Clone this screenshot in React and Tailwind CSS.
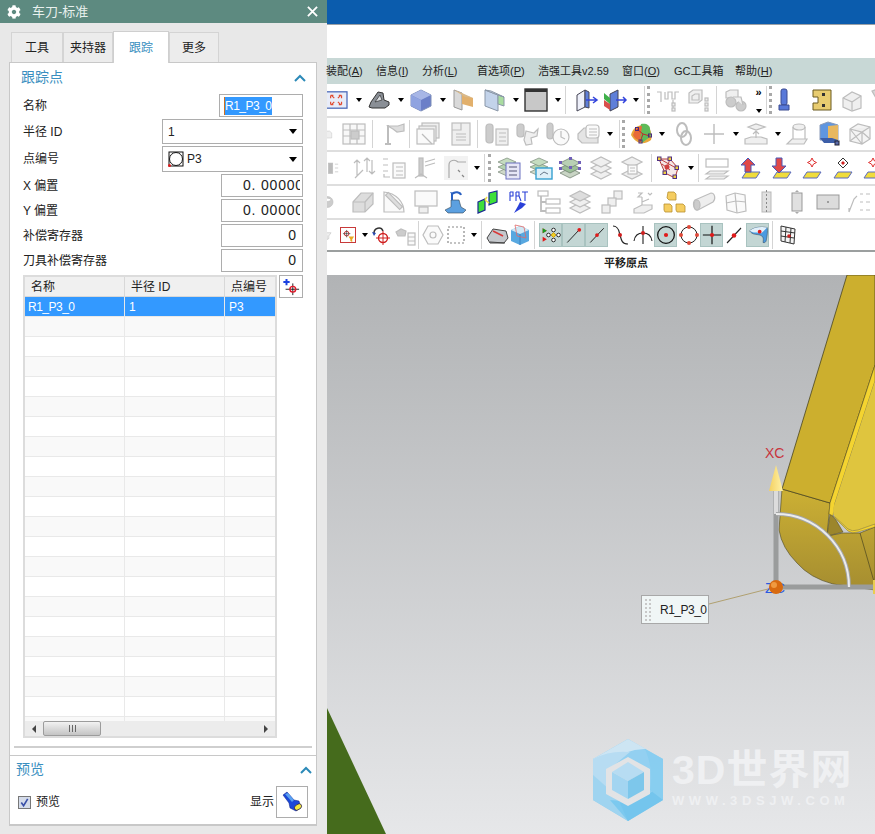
import { FaCog } from "react-icons/fa";

// icons are drawn slightly over their 22px slot, as in the reference
const T = ({ c = "", w = "w-[22px]", children }) => (
  <svg viewBox="1 1 22 22" className={`h-[22px] ${w} shrink-0 overflow-visible ${c}`}>
    {children}
  </svg>
);

// disabled (greyed out) toolbar icon
const Gy = ({ c, w, children }) => (
  <T c={c} w={w}>
    <g fill="#efefef" stroke="#bdbdbd" strokeWidth="1.2">
      {children}
    </g>
  </T>
);

const Caret = ({ c = "" }) => (
  <span className={`h-0 w-0 shrink-0 border-x-[3.5px] border-t-[4px] border-x-transparent border-t-black ${c}`} />
);
const Sep = ({ c = "" }) => <span className={`h-[28px] w-px shrink-0 bg-[#d4d4d4] ${c}`} />;
const Grip = ({ c = "" }) => (
  <span className={`h-[28px] w-[3px] shrink-0 border-l-[3px] border-dotted border-[#a8a8a8] ${c}`} />
);
const Hl = ({ c = "", children }) => (
  <span className={`flex h-[24px] w-[23px] shrink-0 items-center justify-center border border-[#a9c3c0] bg-[#c3d6d4] ${c}`}>
    {children}
  </span>
);

const Row = ({ children, last }) => (
  <div className={`flex items-center overflow-hidden bg-white ${last ? "h-[32px] border-b-2 border-[#9b9f9f]" : "h-[34px] border-b-2 border-[#dedede]"}`}>
    {children}
  </div>
);

const Layers = ({ c, inner }) => (
  <T c={c}>
    <g stroke="#7a8a7a" strokeWidth=".7">
      <path d="M2 16l9-4 9 4-9 4z" fill="#cfd8c8" />
      <path d="M2 11l9-4 9 4-9 4z" fill="#b5d3b0" />
      <path d="M2 6l9-4 9 4-9 4z" fill="#c5dcc0" />
    </g>
    {inner}
  </T>
);

const Plane = ({ c, children }) => (
  <T c={c}>
    <path d="M5 22l4-6h14l-4 6z" fill="#f0dc3c" stroke="#5a6ac0" />
    {children}
  </T>
);

const Toolbars = () => (
  <div>
    <Row>
      <T w="w-[20px]">
        <rect x="-4" y="3" width="27" height="18" fill="#e8ecf8" stroke="#4a68b8" strokeWidth="1.4" />
        <path d="M6 7l3 3M16 7l-3 3M6 17l3-3M16 17l-3-3M5 7h3M5 7v3M17 7h-3M17 7v3M5 17h3M5 17v-3M17 17h-3M17 17v-3" stroke="#e04a30" strokeWidth="1.3" fill="none" />
      </T>
      <Caret c="ml-[9px]" />
      <T c="ml-[6px]">
        <path d="M2 19l2-5 7-10 5 1 1 7 5 2v3l-4 3H5z" fill="#8a8f96" stroke="#333" />
        <path d="M8 14l5-7 2 5z" fill="#d9dce0" stroke="#333" strokeWidth=".7" />
      </T>
      <Caret c="ml-[8px]" />
      <T c="ml-[6px]">
        <path d="M2 7l10-5 10 5v11l-10 5-10-5z" fill="#6b7fc8" stroke="#7f8fb8" />
        <path d="M2 7l10-5 10 5-10 5z" fill="#a7b6e6" />
        <path d="M2 7l10 5v11l-10-5z" fill="#8fa3e0" />
      </T>
      <Caret c="ml-[8px]" />
      <T c="ml-[6px]">
        <path d="M3 2l8 3v17l-8-3z" fill="#d9d9d9" stroke="#999" />
        <path d="M11 6l11 4v9l-11-3z" fill="#e2b06c" />
        <path d="M3 2l8 3 11 5-8-1z" fill="#d9b98a" />
      </T>
      <T c="ml-[9px]">
        <path d="M3 2l13 5v16l-13-5z" fill="#c3d3ea" stroke="#8a97a8" />
        <path d="M16 7l6 2v9l-6-2z" fill="#a9dca0" stroke="#8a97a8" />
        <path d="M3 2l6 1 13 6-6-2z" fill="#dfe6ee" stroke="#8a97a8" />
      </T>
      <Caret c="ml-[8px]" />
      <T c="ml-[6px]">
        <rect x="1" y="1" width="22" height="22" fill="#c8c8c8" stroke="#333" strokeWidth="1.4" />
        <rect x="1" y="1" width="22" height="3" fill="#333" />
      </T>
      <Caret c="ml-[8px]" />
      <Sep c="ml-[4px]" />
      <T c="ml-[9px]">
        <path d="M3 7l8-5v17l-8 4z" fill="#eef0fa" stroke="#445" />
        <path d="M11 2l4 2v16l-4-1z" fill="#5f7fd8" stroke="#445" />
        <path d="M12 12h11M19 9l4 3-4 3" stroke="#3344dd" strokeWidth="1.5" fill="none" />
      </T>
      <T c="ml-[7px]">
        <path d="M7 6l8-4v17l-8 4z" fill="#5f7fd8" stroke="#445" />
        <path d="M1 5l6 5v6l-6-5z" fill="#3fb04a" />
        <path d="M1 12l6 4v6l-6-4z" fill="#d8504a" />
        <path d="M13 12h10M20 9l3 3-3 3" stroke="#3344dd" strokeWidth="1.5" fill="none" />
      </T>
      <Caret c="ml-[7px]" />
      <Sep c="ml-[5px]" />
      <Grip c="ml-[2px]" />
      <Gy c="ml-[7px]">
        <path d="M1 4h4v10M5 4v10M9 4v7h3V4h4v7h3V4h4M17 12v9" fill="none" />
        <rect x="16" y="15" width="3" height="3" />
        <rect x="16" y="20" width="3" height="3" />
      </Gy>
      <Gy c="ml-[9px]">
        <path d="M2 5l4-3h9v10l-4 3H2z" />
        <path d="M5 8l3-2h4v6H5z" />
        <rect x="18" y="10" width="3" height="3" />
        <rect x="18" y="15" width="3" height="3" />
        <rect x="18" y="20" width="3" height="3" />
      </Gy>
      <Sep c="ml-[6px]" />
      <Gy c="ml-[7px]">
        <path d="M3 4l4-2h8v8H3z" />
        <circle cx="8" cy="14" r="5" fill="#ccc" />
        <circle cx="18" cy="18" r="5" fill="#ccc" />
        <path d="M10 9h8l2 8" />
      </Gy>
      <span className="ml-[8px] flex h-[26px] w-[9px] shrink-0 flex-col items-center justify-between">
        <span className="text-[11px] font-bold leading-[10px] text-black">»</span>
        <Caret />
      </span>
      <Sep c="ml-[3px]" />
      <Grip c="ml-[2px]" />
      <T c="ml-[7px]">
        <rect x="3" y="1" width="6" height="16" rx="2" fill="#5878d8" stroke="#3a4a90" />
        <path d="M1 17h10v5H1z" fill="#5878d8" stroke="#3a4a90" />
      </T>
      <T c="ml-[10px]">
        <path d="M3 2h18v20H3v-7h5V9H3z" fill="#e8cc70" stroke="#6a5a20" />
        <rect x="12" y="5" width="3" height="3" fill="#333" />
        <rect x="12" y="16" width="3" height="3" fill="#333" />
      </T>
      <Gy c="ml-[8px]">
        <path d="M3 10l9-6 9 4v12l-9 3-9-4z" />
        <path d="M3 10l9 4v9M12 14l9-6" />
      </Gy>
      <Gy c="ml-[8px]">
        <path d="M2 3l6-2 3 6-5 3z" fill="#d8d8d8" />
        <rect x="8" y="9" width="14" height="13" />
        <path d="M11 13h8M11 16h8M11 19h8" />
      </Gy>
    </Row>

    <Row>
      <Gy w="w-[8px]">
        <path d="M-4 4h12l6 5v14H-4z" />
      </Gy>
      <Gy c="ml-[8px]">
        <rect x="1" y="2" width="22" height="20" fill="#f8f8f8" />
        <path d="M1 8h22M1 14h22M8 2v20M15 2v20" />
        <rect x="9" y="9" width="8" height="8" fill="#ccc" />
      </Gy>
      <Sep c="ml-[7px]" />
      <Gy c="ml-[10px]">
        <path d="M6 3v18M3 22h6" strokeWidth="2" fill="none" />
        <path d="M6 4l10 0 6-2v7l-7 1-4-3z" fill="#ddd" />
      </Gy>
      <Sep c="ml-[4px]" />
      <Gy c="ml-[7px]">
        <rect x="6" y="1" width="17" height="15" />
        <rect x="3" y="4" width="17" height="15" />
        <rect x="1" y="7" width="17" height="15" fill="#fafafa" />
        <path d="M6 12l10 10" />
      </Gy>
      <Gy c="ml-[10px]">
        <rect x="4" y="1" width="18" height="22" />
        <path d="M4 8h9V1M8 12h10M8 15h10M8 18h10" fill="none" />
      </Gy>
      <Sep c="ml-[6px]" />
      <Gy c="ml-[8px]">
        <rect x="1" y="2" width="7" height="19" rx="3" fill="#ccc" />
        <rect x="11" y="7" width="12" height="16" />
        <path d="M14 11h7M14 15h7M14 19h7" />
      </Gy>
      <Gy c="ml-[9px]">
        <rect x="1" y="2" width="7" height="13" rx="3" fill="#ccc" />
        <path d="M10 9l8 2 4-4-1 7-6 2 1 6-6 1-2-5z" />
      </Gy>
      <Gy c="ml-[8px]">
        <rect x="1" y="1" width="6" height="16" rx="3" fill="#ccc" />
        <circle cx="15" cy="15" r="8" fill="#fafafa" />
        <path d="M15 9v6l4 2" fill="none" />
      </Gy>
      <Gy c="ml-[9px]">
        <path d="M1 12l6-6h14v15H5l-4-4z" fill="#e4e4e4" />
        <rect x="9" y="3" width="13" height="13" rx="3" fill="#fafafa" />
        <path d="M12 7h8M12 10h8M12 13h8" />
      </Gy>
      <Caret c="ml-[7px]" />
      <Sep c="ml-[6px]" />
      <Grip c="ml-[2px]" />
      <T c="ml-[5px]">
        <path d="M2 13C4 4 12 1 20 4c1 5 4 8 2 14-5 4-14 6-20-5z" fill="#e9a63a" />
        <path d="M12 2c5-1 9 1 9 5l1 7-9 7c-2-5-3-12-1-19z" fill="#5fbb5a" />
        <path d="M6 8c3-3 5-4 7-4l-2 14c-3 0-6-2-7-5z" fill="#e86a3a" />
        <path d="M8 7l6 5 7 2M14 12l-3 8" stroke="#c02a2a" fill="none" />
        <rect x="6.500" y="5.500" width="3" height="3" fill="none" stroke="#4a2a80" />
        <rect x="10" y="18" width="3" height="3" fill="none" stroke="#4a2a80" />
        <rect x="19.500" y="12" width="3" height="3" fill="none" stroke="#4a2a80" />
      </T>
      <Caret c="ml-[7px]" />
      <Gy c="ml-[8px]">
        <ellipse cx="10" cy="8" rx="5" ry="7" fill="none" strokeWidth="2" />
        <ellipse cx="14" cy="16" rx="5" ry="7" fill="none" strokeWidth="2" />
      </Gy>
      <Gy c="ml-[8px]">
        <path d="M12 2v20M2 12h20" strokeWidth="1.4" />
      </Gy>
      <Caret c="ml-[8px]" />
      <Gy c="ml-[6px]">
        <path d="M4 5l8-3 9 3-9 3z" />
        <path d="M1 17l6-2h10l6 2v5H1z" />
        <path d="M12 16V9M9 12l3-3 3 3" fill="none" />
      </Gy>
      <Caret c="ml-[8px]" />
      <Gy c="ml-[6px]">
        <ellipse cx="13" cy="5" rx="6" ry="3" />
        <path d="M7 5v12M19 5v12" />
        <path d="M1 22l5-5h15l-3 5z" />
      </Gy>
      <T c="ml-[9px]">
        <path d="M3 3l8-3 10 3v15H3z" fill="#5f96e0" stroke="#8a9ab8" />
        <path d="M11 4l10-1v15H11z" fill="#e8b860" />
        <path d="M3 16h12l6 2v3H7z" fill="#3c5ea8" />
        <rect x="18" y="19" width="4" height="4" fill="#5a6aa8" stroke="#223" />
      </T>
      <Gy c="ml-[9px]">
        <path d="M2 7l8-5 12 3v12l-8 5-12-3z" fill="#f4f4f4" />
        <path d="M2 7l12 3 8-5M14 10v12M2 7l12 15M14 10l8 7M2 19L14 10" />
      </Gy>
    </Row>

    <Row>
      <Gy c="ml-[3px]" w="w-[12px]">
        <rect x="-2" y="3" width="8" height="19" fill="#bbb" />
        <path d="M10 5h6M10 12h6M10 19h6" fill="none" />
      </Gy>
      <Gy c="ml-[11px]">
        <path d="M3 22l8-8M5 4v16M2 7l3-3 3 3M15 2v14M12 5l3-3 3 3M20 4v14M17 15l3 3 3-3" fill="none" />
      </Gy>
      <Gy c="ml-[8px]">
        <path d="M1 3h5M1 9h5M1 15h5" fill="none" />
        <rect x="11" y="7" width="12" height="15" fill="#fafafa" />
        <path d="M14 11h7M14 15h7M14 19h7M2 18v3h6" fill="none" />
      </Gy>
      <Gy c="ml-[9px]">
        <rect x="6" y="2" width="4" height="18" fill="#ccc" />
        <path d="M12 6l10-3M12 10l10-3M2 22l6-4 6 4" fill="none" />
      </Gy>
      <T c="ml-[9px]">
        <rect x="0" y="0" width="24" height="24" fill="#f2f2f2" />
        <path d="M5 22V9c0-5 6-6 9-3l8 0" fill="none" stroke="#aaa" strokeWidth="1.2" />
        <path d="M14 14l2 2M18 19l2 2" stroke="#888" strokeWidth="1.2" />
      </T>
      <Caret c="ml-[7px]" />
      <Sep c="ml-[4px]" />
      <Grip c="ml-[3px]" />
      <Layers c="ml-[6px]" inner={<g><rect x="10" y="7" width="14" height="16" fill="#e6e6f6" stroke="#6a70c0" /><path d="M13 11h8M13 15h8M13 19h8" stroke="#557" /></g>} />
      <Layers c="ml-[10px]" inner={<g><rect x="8" y="12" width="16" height="11" fill="#dff0f8" stroke="#35a0d0" strokeWidth="1.4" /><path d="M12 19l4-3 4 2" stroke="#678" fill="none" /></g>} />
      <T c="ml-[8px]">
        <g stroke="#6a7a6a" strokeWidth=".7">
          <path d="M2 17l10-5 10 5-10 5z" fill="#c8d4c4" />
          <path d="M2 12l10-5 10 5-10 5z" fill="#9cbf98" />
          <path d="M2 7l10-5 10 5-10 5z" fill="#b8d0b4" />
        </g>
        <g fill="#7060b8">
          <rect x="1" y="5" width="3" height="3" /><rect x="11" y="1" width="3" height="3" /><rect x="20" y="5" width="3" height="3" /><rect x="11" y="10" width="3" height="3" /><rect x="1" y="11" width="3" height="3" /><rect x="20" y="11" width="3" height="3" />
        </g>
      </T>
      <Gy c="ml-[9px]">
        <path d="M2 18l10-5 10 5-10 5z" />
        <path d="M2 12l10-5 10 5-10 5z" />
        <path d="M2 6l10-5 10 5-10 5z" />
      </Gy>
      <Gy c="ml-[9px]">
        <path d="M2 18l10-5 10 5-10 5z" />
        <path d="M2 6l10-5 10 5-10 5z" />
        <rect x="8" y="9" width="9" height="9" fill="#fafafa" />
        <path d="M10 12h5M10 15h5" />
      </Gy>
      <Sep c="ml-[8px]" />
      <T c="ml-[5px]">
        <path d="M3 3l6 14 10 5 3-10-8-9z" fill="#f4e8e8" stroke="#b03a3a" />
        <path d="M4 3l16 9M9 17l5-14M6 8l8 6" stroke="#c04040" fill="none" />
        <circle cx="11" cy="11" r="2.500" fill="#d04040" />
        <g fill="#f0d040" stroke="#503080">
          <rect x="1.500" y="1" width="3.500" height="3.500" /><rect x="12" y="1" width="3.500" height="3.500" /><rect x="19" y="10" width="3.500" height="3.500" /><rect x="17" y="19" width="3.500" height="3.500" /><rect x="7" y="15" width="3.500" height="3.500" />
        </g>
      </T>
      <Caret c="ml-[9px]" />
      <Sep c="ml-[4px]" />
      <Gy c="ml-[7px]">
        <rect x="1" y="3" width="22" height="8" fill="#fff" />
        <path d="M5 15h18l-4 3H1zM5 20h18l-4 3H1z" />
      </Gy>
      <Plane c="ml-[10px]">
        <path d="M11 2l7 7h-4v7H8V9H4z" fill="#e04848" stroke="#4858b8" />
      </Plane>
      <Plane c="ml-[9px]">
        <path d="M11 17l7-7h-4V2H8v8H4z" fill="#e04848" stroke="#4858b8" />
      </Plane>
      <Plane c="ml-[8px]">
        <path d="M13 8l1.500 3 3 1.500-3 1.500-1.500 3-1.500-3-3-1.500 3-1.500z" fill="#fff" stroke="#e03030" transform="translate(1 -6)" />
      </Plane>
      <Plane c="ml-[9px]">
        <path d="M14 2l5 5-5 5-5-5z" fill="#fff" stroke="#333" />
        <path d="M14 5l2 2-2 2-2-2z" fill="#d02020" />
      </Plane>
      <Plane c="ml-[8px]">
        <path d="M13 8l1.500 3 3 1.500-3 1.500-1.500 3-1.500-3-3-1.500 3-1.500z" fill="#fff" stroke="#e03030" transform="translate(1 -6)" />
      </Plane>
    </Row>

    <Row>
      <Gy w="w-[12px]">
        <circle cx="2" cy="12" r="10" fill="#ccc" />
        <ellipse cx="2" cy="8" rx="6" ry="3" fill="#fff" />
      </Gy>
      <Gy c="ml-[13px]">
        <path d="M2 12l8-9h12v11l-8 8H2z" fill="#ddd" />
        <path d="M2 12h12v10M14 12l8-9" fill="none" />
      </Gy>
      <Gy c="ml-[9px]">
        <path d="M2 2v20h20C22 12 14 3 2 2z" fill="#fafafa" />
        <rect x="10" y="1" width="4" height="20" fill="#ddd" transform="rotate(-45 12 11)" />
      </Gy>
      <Gy c="ml-[10px]">
        <rect x="1" y="1" width="22" height="15" fill="#fafafa" />
        <rect x="5" y="17" width="9" height="6" />
      </Gy>
      <T c="ml-[7px]">
        <path d="M2 20l6-3V10l8 0 2 7 5 3-3 3H5z" fill="#5ca0e0" stroke="#345" strokeWidth=".6" />
        <path d="M9 10V4c3-3 8-2 9 1" fill="none" stroke="#2a60c0" strokeWidth="2" />
        <path d="M7 2l2 3 3-2" fill="#2a60c0" />
      </T>
      <T c="ml-[11px]">
        <path d="M2 12l7-3v11l-7 3z" fill="#3ee03a" stroke="#1a2a90" strokeWidth="1.2" />
        <path d="M13 3l8-2v11l-8 3z" fill="#3ee03a" stroke="#1a2a90" strokeWidth="1.2" />
        <path d="M9 10l4 3M11 7l-2 3" stroke="#f0e040" strokeWidth="1.5" />
      </T>
      <T c="ml-[8px]">
        <path d="M14 12l6 2-4 4-8 5 4-7z" fill="#2a40d8" />
        <path d="M4 2v9M4 2h3v4H4M10 2v9M10 2h3v4h-3M13 6l2 5M16 2h6M19 2v9" stroke="#2a40d8" fill="none" strokeWidth="1.1" />
      </T>
      <Gy c="ml-[9px]">
        <rect x="1" y="1" width="10" height="5" fill="#fff" />
        <path d="M4 6v16M4 12h6M4 21h6" fill="none" strokeWidth="1.8" />
        <rect x="9" y="9" width="14" height="5" fill="#fff" />
        <rect x="9" y="18" width="14" height="5" fill="#fff" />
      </Gy>
      <Gy c="ml-[9px]">
        <path d="M2 18l10-5 10 5-10 5z" />
        <path d="M2 12l10-5 10 5-10 5z" />
        <path d="M2 6l10-5 10 5-10 5z" fill="#ddd" />
      </Gy>
      <Gy c="ml-[10px]">
        <rect x="14" y="1" width="8" height="8" />
        <rect x="8" y="8" width="8" height="8" />
        <rect x="2" y="15" width="8" height="8" />
      </Gy>
      <Gy c="ml-[9px]">
        <path d="M3 19l8-4h10v4l-8 4H3z" />
        <path d="M11 15V7M11 12l7-3" fill="none" />
        <path d="M7 3h4l-4 4h4M17 3l2 2 2-2" fill="none" />
      </Gy>
      <T c="ml-[9px]">
        <g fill="#f5cd60" stroke="#b89030" strokeWidth=".8">
          <path d="M6 2l6 0 2 2v6H7L5 8z" />
          <path d="M2 14h6l2 2v6H3l-1-2z" />
          <path d="M14 14h7l2 2v6h-8l-1-2z" />
        </g>
      </T>
      <Gy c="ml-[8px]">
        <path d="M3 10l16-7c4 0 5 6 2 9L6 20c-4 1-6-7-3-10z" fill="#eee" />
        <ellipse cx="5" cy="15" rx="3" ry="5" fill="#ccc" />
      </Gy>
      <Gy c="ml-[10px]">
        <path d="M2 6l9-3 10 2 1 16-9 2-10-3z" fill="#fafafa" />
        <path d="M11 3l2 20M2 13l10-2 10 1" fill="none" />
      </Gy>
      <T c="ml-[8px]">
        <rect x="8" y="2" width="9" height="20" fill="#e0e0e0" stroke="#b9b9b9" />
        <path d="M12.500 0v24" stroke="#888" strokeDasharray="2 2" />
      </T>
      <T c="ml-[9px]">
        <rect x="7" y="3" width="10" height="18" fill="#e0e0e0" stroke="#999" />
        <path d="M12 0l2 2h-4zM12 24l2-2h-4z" fill="#aaa" />
      </T>
      <T c="ml-[9px]">
        <rect x="1" y="5" width="22" height="14" fill="#dcdcdc" stroke="#999" />
        <circle cx="12" cy="12" r="1" fill="#888" />
      </T>
      <Gy c="ml-[9px]">
        <path d="M2 22l5-13 3-3M2 22v-4" fill="none" />
        <path d="M13 4h3M19 4h4M13 12h3M19 12h4M13 20h3M19 20h4" fill="none" />
      </Gy>
    </Row>

    <Row last>
      <Gy w="w-[10px]">
        <path d="M-4 7h14l-5 7v6l-4 2v-8z" />
      </Gy>
      <span className="ml-[3px] flex h-[16px] w-[16px] shrink-0 items-center justify-center border border-[#c83a3a]">
        <svg viewBox="0 0 14 14" className="h-[13px] w-[13px]">
          <circle cx="5" cy="5" r="2.500" fill="none" stroke="#c02020" />
          <path d="M5 1v8M1 5h8" stroke="#333" strokeWidth=".7" />
          <path d="M7 8h6l-2 3v3l-2-1v-2z" fill="#e8a820" />
        </svg>
      </span>
      <Caret c="ml-[6px]" />
      <T c="ml-[3px]">
        <path d="M4 10c0-5 7-7 9-2" fill="none" stroke="#333" strokeWidth="1.5" />
        <path d="M2 9l4 1-2 3z" fill="#2848b0" />
        <circle cx="13" cy="15" r="4.500" fill="none" stroke="#d02020" strokeWidth="1.4" />
        <path d="M13 8v14M6 15h14" stroke="#d02020" />
      </T>
      <Gy c="ml-[1px]">
        <path d="M3 9l5-3 5 2-1 5H5z" fill="#ccc" />
        <rect x="15" y="10" width="7" height="12" fill="#fafafa" />
        <path d="M15 14h7M15 18h7" />
      </Gy>
      <Sep c="ml-[2px]" />
      <Gy c="ml-[3px]">
        <path d="M7 3h10l5 9-5 9H7l-5-9z" fill="#fafafa" />
        <circle cx="12" cy="12" r="3" fill="none" />
      </Gy>
      <Gy c="ml-[1px]">
        <rect x="4" y="4" width="16" height="16" fill="#fff" strokeDasharray="2 2" stroke="#888" />
      </Gy>
      <Caret c="ml-[4px]" />
      <Sep c="ml-[4px]" />
      <T c="ml-[4px]">
        <path d="M2 15l6-9 13 2 2 7-4 5H5z" fill="#c5c8cc" stroke="#444" />
        <path d="M8 8l10 5" stroke="#d83a3a" strokeWidth="1.6" />
        <path d="M5 19l15 1" stroke="#444" />
      </T>
      <T c="ml-[1px]">
        <path d="M3 7l9-4 9 4v11l-9 4-9-4z" fill="#58a8e0" />
        <path d="M3 7l9 4 9-4-9-4z" fill="#cfe8f4" />
        <path d="M12 11v11" stroke="#3880c0" />
        <path d="M7 2l9 2 2 11-9-2z" fill="none" stroke="#e06a6a" strokeWidth=".8" />
      </T>
      <Sep c="ml-[3px]" />
      <Hl c="ml-[4px]">
        <svg viewBox="0 0 24 24" className="h-[20px] w-[20px]">
          <path d="M2 4l5 3-5 3zM2 14l5 3-5 3z" fill="#e01a1a" />
          <path d="M2 4l5 3-5 3z" fill="#14a020" />
          <circle cx="15" cy="6" r="2.200" fill="#fff" stroke="#111" />
          <circle cx="15" cy="18" r="2.200" fill="#fff" stroke="#111" />
          <circle cx="9" cy="12" r="2.200" fill="#fff" stroke="#111" />
          <circle cx="21" cy="12" r="2.200" fill="#fff" stroke="#111" />
          <path d="M15 9l3 3-3 3-3-3z" fill="#f0d020" stroke="#c09010" />
        </svg>
      </Hl>
      <Hl>
        <svg viewBox="0 0 24 24" className="h-[18px] w-[18px]">
          <path d="M3 22L19 5" stroke="#222" strokeWidth="1.3" />
          <circle cx="19" cy="5" r="2.500" fill="#e01a1a" />
        </svg>
      </Hl>
      <Hl>
        <svg viewBox="0 0 24 24" className="h-[18px] w-[18px]">
          <path d="M3 22L21 3" stroke="#222" strokeWidth="1.3" />
          <circle cx="12" cy="12" r="2.500" fill="#e01a1a" />
        </svg>
      </Hl>
      <T c="ml-[1px]">
        <path d="M5 3c6 0 6 6 7 9s1 9 8 9" fill="none" stroke="#222" strokeWidth="1.2" />
        <circle cx="12" cy="12" r="2" fill="#d02020" />
      </T>
      <T c="ml-[1px]">
        <path d="M3 18c1-7 5-8 9-8s8 1 9 8M12 3v18" fill="none" stroke="#222" strokeWidth="1.1" />
        <circle cx="12" cy="10" r="2" fill="#d02020" />
      </T>
      <Hl>
        <svg viewBox="0 0 24 24" className="h-[20px] w-[20px]">
          <circle cx="12" cy="12" r="10" fill="none" stroke="#111" strokeWidth="1.5" />
          <circle cx="12" cy="12" r="2.500" fill="#e01a1a" />
        </svg>
      </Hl>
      <T c="ml-[1px]">
        <circle cx="12" cy="12" r="8" fill="none" stroke="#222" />
        <circle cx="12" cy="4" r="2" fill="#e04a3a" />
        <circle cx="12" cy="20" r="2" fill="#e04a3a" />
        <circle cx="4" cy="12" r="2" fill="#e04a3a" />
        <circle cx="20" cy="12" r="2" fill="#e04a3a" />
      </T>
      <Hl>
        <svg viewBox="0 0 24 24" className="h-[20px] w-[20px]">
          <path d="M12 1v22M1 12h22" stroke="#111" strokeWidth="1.4" />
          <circle cx="12" cy="12" r="2.500" fill="#e01a1a" />
        </svg>
      </Hl>
      <T>
        <path d="M5 20L19 5" stroke="#222" strokeWidth="1.1" />
        <circle cx="12" cy="12.500" r="2.300" fill="#e01a1a" />
      </T>
      <Hl c="ml-[1px]">
        <svg viewBox="0 0 24 24" className="h-[20px] w-[20px]">
          <path d="M2 7c6-5 14-5 21-4 1 4 0 10-1 15 0 2-2 4-4 3 1-5 0-8-4-9-4-1-9 0-12-5z" fill="#4a9ae0" stroke="#345" strokeWidth=".6" />
          <path d="M2 7c6-5 14-5 21-4l-7 7c-5-1-10 0-14-3z" fill="#e2f0fa" />
          <circle cx="14" cy="8" r="2.300" fill="#e01a1a" />
        </svg>
      </Hl>
      <Sep c="ml-[3px]" />
      <T c="ml-[4px]">
        <path d="M5 3l14 3-1 15-13-3z" fill="#f4f4f4" stroke="#333" />
        <path d="M5 8l14 2M5 13l13 2M10 4l-1 15M15 5l-1 15" stroke="#333" />
        <circle cx="13" cy="13" r="1.800" fill="#d02020" />
      </T>
    </Row>
  </div>
);

const Chevron = ({ c = "" }) => (
  <svg viewBox="0 0 12 8" className={`h-[8px] w-[12px] ${c}`}>
    <path d="M1 7l5-5 5 5" fill="none" stroke="#2c8ab8" strokeWidth="2" />
  </svg>
);

const FormRow = ({ label, height = "h-[23px]", children }) => (
  <div className={`mt-[2px] flex items-center justify-between ${height}`}>
    <span>{label}</span>
    {children}
  </div>
);

const NumField = ({ value }) => (
  <div className="flex h-full w-[82px] items-center justify-end border border-[#adadad] pr-[6px] text-[14px]">{value}</div>
);

// the value is wider than the field and gets cut off on the right, as in the app
const DecField = () => (
  <div className="h-full w-[82px] border border-[#adadad] pl-[21px] pr-[2px]">
    <div className="h-full overflow-hidden whitespace-nowrap text-[14px] leading-[21px] tracking-[.8px]">0. 000000</div>
  </div>
);

const SelectField = ({ children }) => (
  <div className="flex h-full w-[141px] items-center justify-between border border-[#adadad] pl-[5px] pr-[5px]">
    <span className="flex items-center">{children}</span>
    <span className="h-0 w-0 border-x-[4px] border-t-[5px] border-x-transparent border-t-black" />
  </div>
);

const tableRows = Array.from({ length: 21 }, (_, i) => i);

const Panel = () => (
  <div className="flex h-[834px] w-[327px] shrink-0 flex-col bg-[#e8e8e8] text-[12px] text-[#222]">
    <div className="flex h-[23px] shrink-0 items-center bg-[#5d8a80] pl-[7px] pr-[9px] text-white">
      <FaCog className="h-[14px] w-[14px]" />
      <span className="ml-[11px] text-[13px] text-[#e8f0ee]">车刀-标准</span>
      <svg viewBox="0 0 12 12" className="ml-auto h-[11px] w-[11px]">
        <path d="M1 1l10 10M11 1L1 11" stroke="#fff" strokeWidth="2" />
      </svg>
    </div>

    <div className="flex h-[39px] shrink-0 items-end pl-[11px]">
      <div className="flex h-[30px] w-[52px] items-center justify-center border border-b-0 border-[#d4d4d4] bg-[#ececec]">工具</div>
      <div className="flex h-[30px] w-[50px] items-center justify-center border border-b-0 border-[#d4d4d4] bg-[#ececec]">夹持器</div>
      <div className="relative top-px z-10 flex h-[32px] w-[56px] items-center justify-center border border-b-0 border-[#cfcfcf] bg-white text-[#3a8fc0]">跟踪</div>
      <div className="flex h-[30px] w-[50px] items-center justify-center border border-b-0 border-[#d4d4d4] bg-[#ececec]">更多</div>
    </div>

    <div className="ml-[9px] flex h-[694px] w-[308px] shrink-0 flex-col border border-[#c8c8c8] bg-white px-[13px]">
      <div className="flex h-[29px] shrink-0 items-center justify-between">
        <span className="-ml-[2px] text-[14px] text-[#3a8fc0]">跟踪点</span>
        <Chevron c="mr-[-3px]" />
      </div>
      <FormRow label="名称">
        <div className="flex h-full w-[84px] items-center border border-[#adadad] pl-[4px]">
          <span className="border-l border-[#d07020] bg-[#3399ff] tracking-[-.5px] text-white">R1_P3_0</span>
        </div>
      </FormRow>
      <FormRow label="半径 ID" height="h-[25px]">
        <SelectField>1</SelectField>
      </FormRow>
      <FormRow label="点编号" height="h-[26px]">
        <SelectField>
          <svg viewBox="0 0 16 16" className="mr-[3px] h-[16px] w-[16px]">
            <rect x="1" y="1" width="14" height="14" fill="#fff" stroke="#111" />
            <circle cx="8" cy="8" r="6.500" fill="#fff" stroke="#111" />
            <circle cx="1.500" cy="14.500" r="1.500" fill="#e01a1a" />
          </svg>
          P3
        </SelectField>
      </FormRow>
      <FormRow label="X 偏置">
        <DecField />
      </FormRow>
      <FormRow label="Y 偏置">
        <DecField />
      </FormRow>
      <FormRow label="补偿寄存器">
        <NumField value="0" />
      </FormRow>
      <FormRow label="刀具补偿寄存器">
        <NumField value="0" />
      </FormRow>

      <div className="mt-[3px] flex items-start justify-between">
        <div className="flex h-[463px] w-[254px] flex-col border-2 border-[#dcdcdc] bg-white">
          <div className="flex h-[20px] shrink-0 border-b border-[#d8d8d8] bg-[#f0f0f0]">
            <div className="flex w-[100px] items-center border-r border-[#d8d8d8] pl-[6px]">名称</div>
            <div className="flex w-[100px] items-center border-r border-[#d8d8d8] pl-[6px]">半径 ID</div>
            <div className="flex items-center pl-[6px]">点编号</div>
          </div>
          <div className="flex h-[20px] shrink-0 border-b border-[#e9e9e9] bg-[#3399ff] text-white">
            <div className="flex w-[100px] items-center border-r border-[#e8e8e8] pl-[3px] tracking-[-.5px]">R1_P3_0</div>
            <div className="flex w-[100px] items-center border-r border-[#e8e8e8] pl-[4px]">1</div>
            <div className="flex items-center pl-[4px]">P3</div>
          </div>
          <div className="min-h-0 flex-1 overflow-hidden">
            {tableRows.map((i) => (
              <div key={i} className={`flex h-[20px] border-b border-[#e9e9e9] ${i % 2 === 0 ? "bg-[#f9f9f9]" : "bg-white"}`}>
                <div className="w-[100px] border-r border-[#e9e9e9]" />
                <div className="w-[100px] border-r border-[#e9e9e9]" />
              </div>
            ))}
          </div>
          <div className="flex h-[15px] shrink-0 items-center bg-[#ececec]">
            <span className="ml-[7px] h-0 w-0 border-y-[4px] border-r-[4px] border-y-transparent border-r-[#444]" />
            <div className="ml-[7px] flex h-[15px] w-[58px] items-center justify-center rounded-[2px] border border-[#9c9c9c] bg-linear-to-b from-[#f2f2f2] to-[#c4c4c4]">
              <span className="h-[7px] w-[7px] border-x border-[#666]">
                <span className="mx-auto block h-full w-px bg-[#666]" />
              </span>
            </div>
            <span className="ml-auto mr-[7px] h-0 w-0 border-y-[4px] border-l-[4px] border-y-transparent border-l-[#444]" />
          </div>
        </div>
        <div className="flex h-[23px] w-[24px] items-center justify-center border border-[#adadad]">
          <svg viewBox="0 0 20 20" className="h-[18px] w-[18px]">
            <path d="M5 1v7M1.500 4.500h7" stroke="#1a40e0" strokeWidth="2.200" />
            <path d="M12 6v13M4 12.500h15" stroke="#111" />
            <circle cx="12" cy="12.500" r="3.200" fill="none" stroke="#e01a2a" strokeWidth="1.600" />
          </svg>
        </div>
      </div>
      <div className="mt-[8px] h-[2px] w-[298px] shrink-0 -translate-x-[9px] bg-[#cfcfcf]" />
    </div>

    <div className="ml-[9px] h-[70px] w-[308px] shrink-0 border-x border-b-2 border-[#c8c8c8] bg-white pl-[6px] pr-[4px]">
      <div className="flex h-[27px] items-center justify-between">
        <span className="text-[14px] text-[#3a8fc0]">预览</span>
        <Chevron />
      </div>
      <div className="mt-[3px] flex items-center justify-between pr-[4px]">
        <div className="flex items-center">
          <span className="ml-[2px] flex h-[13px] w-[13px] items-center justify-center border border-[#777] bg-[#d5dcea]">
            <svg viewBox="0 0 12 12" className="h-[11px] w-[11px]">
              <path d="M2.500 6l2.500 3.500L9.500 2" fill="none" stroke="#3a50a8" strokeWidth="1.800" />
            </svg>
          </span>
          <span className="ml-[5px]">预览</span>
        </div>
        <div className="flex items-center">
          <span className="mr-[2px]">显示</span>
          <div className="flex h-[32px] w-[32px] items-center justify-center border border-[#adadad]">
            <svg viewBox="0 0 24 24" className="h-[24px] w-[24px]">
              <path d="M3 5l4-3 7 8 5 1 2 7-5 3-6-3-1-5z" fill="#1a48d8" stroke="#0a1a80" strokeWidth=".5" />
              <path d="M5 4l3-1 6 7-2 2z" fill="#5aa0f0" />
              <ellipse cx="18" cy="17" rx="4" ry="2.600" transform="rotate(-35 18 17)" fill="#f0e840" stroke="#104" strokeWidth=".6" />
            </svg>
          </div>
        </div>
      </div>
    </div>
  </div>
);

const Scene = () => (
  <svg viewBox="327 275 548 559" className="absolute inset-0 h-[559px] w-[548px]">
    <defs>
      <linearGradient id="lower" x1="0" y1="0" x2="0" y2="1">
        <stop offset="0" stopColor="#ccb034" />
        <stop offset="1" stopColor="#a58d30" />
      </linearGradient>
      <linearGradient id="cone" x1="0" y1="0" x2="1" y2="0">
        <stop offset="0" stopColor="#f4d060" />
        <stop offset="1" stopColor="#fff2a8" />
      </linearGradient>
    </defs>
    <polygon points="327,708 386,834 327,834" fill="#456b1c" />
    <path d="M782,489 L830,503 L829,514 L827,536 L843,533 L860,533 L875,527 L875,590 L833,584 Q810,578 797,563 Q782,548 779,530 Z" fill="url(#lower)" stroke="#4a4520" strokeWidth=".6" />
    <polygon points="830,514 827,536 843,532 836,520" fill="#9c862c" stroke="#4a4520" strokeWidth=".5" />
    <polygon points="847,275 875,275 875,365 830,503 782,489" fill="#ccaf2e" stroke="#4a4520" strokeWidth=".8" />
    <polygon points="875,365 830,503 829,514 833,516 835,503 875,381" fill="#f4d430" stroke="#5a5020" strokeWidth=".5" />
    <path d="M875,381 L835,503 Q831,512 835,517 L848,529 Q852,532 858,530 L875,524 Z" fill="#dfc53e" />
    <path d="M833,516 L848,531 Q852,534 858,532 L875,527 L875,524 L858,530 Q852,532 848,529 L835,517 Z" fill="#f4d430" stroke="#5a5020" strokeWidth=".4" />
    <path d="M860,533 L875,585" stroke="#4a4520" strokeWidth=".7" />
    <path d="M776,490 V587 H873" fill="none" stroke="#9a9c9c" strokeWidth="5" />
    <path d="M776,490 V514" stroke="#dcdcdc" strokeWidth="4" />
    <path d="M776,514 A73,73 0 0 1 849,587" fill="none" stroke="#a4a6a6" strokeWidth="4" />
    <path d="M776,514 A73,73 0 0 1 849,587" fill="none" stroke="#ececec" strokeWidth="2" />
    <polygon points="776,465 769,491 783,491" fill="url(#cone)" />
    <rect x="873" y="580" width="3" height="14" fill="#e8cc50" />
    <text x="765" y="458" fontSize="14" fill="#c8343c" fontFamily="Liberation Sans, sans-serif">XC</text>
    <text x="765" y="593" fontSize="15" fill="#2a5ae0" fontFamily="Liberation Sans, sans-serif">ZC</text>
    <circle cx="776" cy="587" r="7" fill="#d86a10" />
    <circle cx="774" cy="585" r="3" fill="#f09a40" />
    <path d="M709,604 L768,589" stroke="#b0a070" strokeWidth="1" />
    <g opacity=".95">
      <polygon points="628,739 663,759 663,800 628,821 593,800 593,759" fill="#8fd0f2" />
      <path d="M593,759 L628,739 L646,749 Q620,748 593,776 Z" fill="#cde6f5" />
      <path d="M593,759 Q610,750 630,752 L606,772 L610,795 L593,800 Z" fill="#b5dcf3" />
      <path d="M593,800 V775 L610,790 L630,808 L628,821 Z" fill="#9cd4f1" />
      <path d="M610,800 L645,803 L628,821 Z" fill="#77c8f0" />
      <path d="M663,800 L628,821 L620,803 Q650,800 663,780 Z" fill="#6fc4ee" />
      <path d="M645,749 L663,759 V800 L650,790 Q654,770 645,749 Z" fill="#84cdf1" />
      <polygon points="628,757 650,769 650,794 628,806 606,794 606,769" fill="#e3e4e6" />
      <polygon points="628,762 644,772 628,781 612,772" fill="#b5dcf3" />
      <polygon points="612,772 628,781 628,799 612,790" fill="#a0d5f2" />
      <polygon points="644,772 628,781 628,799 644,790" fill="#78c6ec" />
    </g>
  </svg>
);

const Viewport = () => (
  <div className="relative h-[559px] overflow-hidden bg-linear-to-b from-[#b1b3b5] to-[#e6e7e9]">
    <Scene />
    <div className="absolute left-[314px] top-[320px] flex h-[29px] w-[68px] items-center border border-[#a8a8a8] bg-[#f0f6f6] pl-[3px] text-[12px] text-[#222]">
      <span className="h-[22px] w-[6px] border-x-2 border-dotted border-[#c8c8c8]" />
      <span className="ml-[9px] tracking-[-.5px]">R1_P3_0</span>
    </div>
    <div className="absolute left-[345px] top-[472px] flex flex-col text-[#eff0f2]">
      <span className="text-[41px] font-bold leading-[46px] tracking-[1px]">3D世界网</span>
      <span className="text-[13px] font-bold leading-[16px] tracking-[4.6px]">WWW.3DSJW.COM</span>
    </div>
  </div>
);

const menus = [
  ["装配", "A", "-ml-px w-[50px]"],
  ["信息", "I", "w-[46px]"],
  ["分析", "L", "w-[55px]"],
  ["首选项", "P", "w-[61px]"],
  ["浩强工具v2.59", "", "w-[84px]"],
  ["窗口", "O", "w-[52px]"],
  ["GC工具箱", "", "w-[61px]"],
  ["帮助", "H", "w-[50px]"],
];

export default function App() {
  return (
    <div className="flex h-[834px] w-[875px] overflow-hidden bg-white font-['Liberation_Sans','Noto_Sans_CJK_SC',sans-serif]">
      <Panel />
      <div className="flex min-w-0 flex-1 flex-col">
        <div className="h-[25px] shrink-0 border-b border-[#9aa0a6] bg-[#0b5cad]" />
        <div className="h-[33px] shrink-0 bg-white" />
        <div className="flex h-[26px] shrink-0 items-center bg-[#c8d8d6] text-[11px] text-[#222]">
          {menus.map(([name, key, w]) => (
            <span key={name} className={`shrink-0 whitespace-nowrap ${w}`}>
              {name}
              {key && (
                <>
                  (<span className="underline">{key}</span>)
                </>
              )}
            </span>
          ))}
        </div>
        <Toolbars />
        <div className="flex h-[23px] shrink-0 items-center bg-white pl-[277px] text-[11px] font-bold text-[#222]">平移原点</div>
        <Viewport />
      </div>
    </div>
  );
}
